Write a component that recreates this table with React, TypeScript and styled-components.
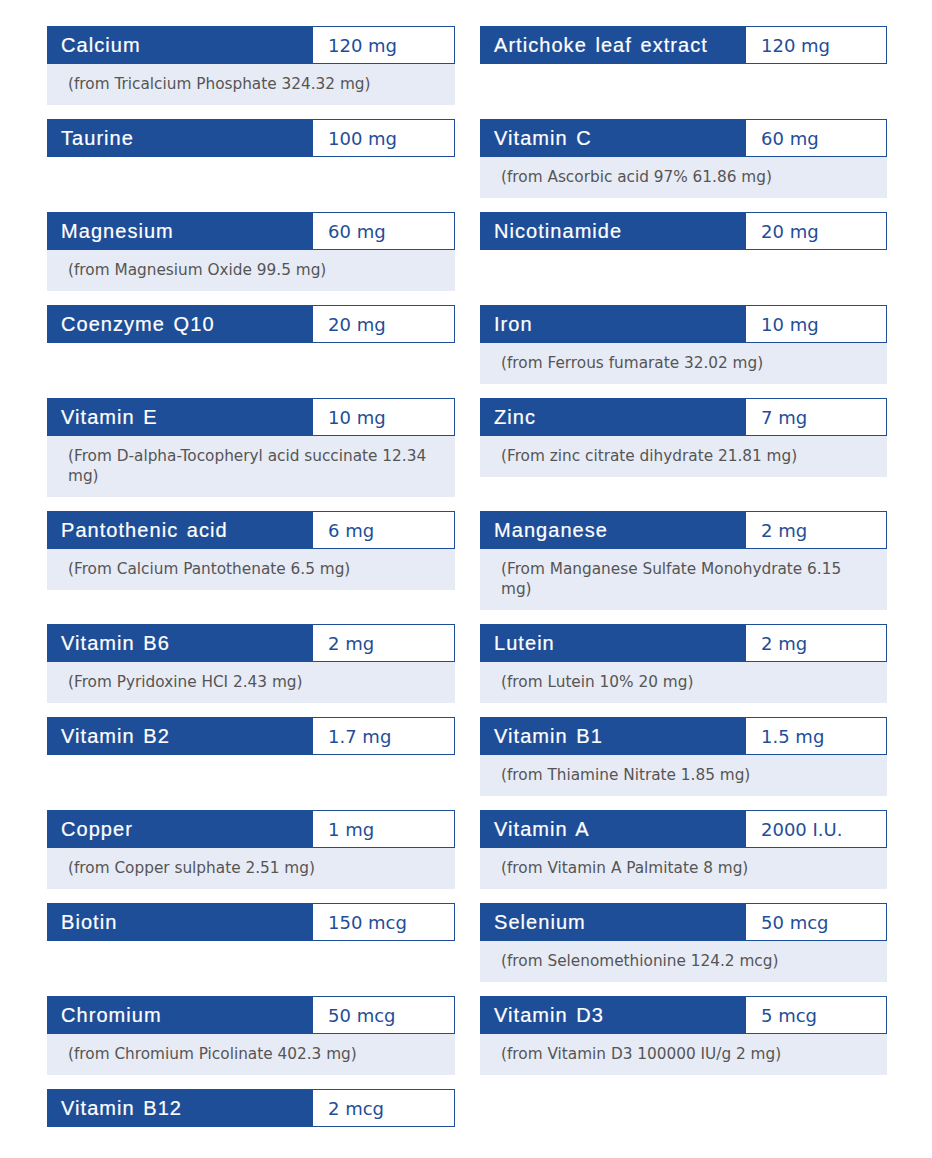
import React from "react";
import styled, { createGlobalStyle } from "styled-components";

const GlobalStyle = createGlobalStyle`
  html, body { margin: 0; padding: 0; background: #ffffff; }
  body { font-family: "DejaVu Sans", Verdana, sans-serif; }
`;

type Item = { name: string; amount: string; source?: string };

const items: (Item | null)[] = [
  { name: "Calcium", amount: "120 mg", source: "(from Tricalcium Phosphate 324.32 mg)" },
  { name: "Artichoke leaf extract", amount: "120 mg" },
  { name: "Taurine", amount: "100 mg" },
  { name: "Vitamin C", amount: "60 mg", source: "(from Ascorbic acid 97% 61.86 mg)" },
  { name: "Magnesium", amount: "60 mg", source: "(from Magnesium Oxide 99.5 mg)" },
  { name: "Nicotinamide", amount: "20 mg" },
  { name: "Coenzyme Q10", amount: "20 mg" },
  { name: "Iron", amount: "10 mg", source: "(from Ferrous fumarate 32.02 mg)" },
  { name: "Vitamin E", amount: "10 mg", source: "(From D-alpha-Tocopheryl acid succinate 12.34 mg)" },
  { name: "Zinc", amount: "7 mg", source: "(From zinc citrate dihydrate 21.81 mg)" },
  { name: "Pantothenic acid", amount: "6 mg", source: "(From Calcium Pantothenate 6.5 mg)" },
  { name: "Manganese", amount: "2 mg", source: "(From Manganese Sulfate Monohydrate 6.15 mg)" },
  { name: "Vitamin B6", amount: "2 mg", source: "(From Pyridoxine HCI 2.43 mg)" },
  { name: "Lutein", amount: "2 mg", source: "(from Lutein 10% 20 mg)" },
  { name: "Vitamin B2", amount: "1.7 mg" },
  { name: "Vitamin B1", amount: "1.5 mg", source: "(from Thiamine Nitrate 1.85 mg)" },
  { name: "Copper", amount: "1 mg", source: "(from Copper sulphate 2.51 mg)" },
  { name: "Vitamin A", amount: "2000 I.U.", source: "(from Vitamin A Palmitate 8 mg)" },
  { name: "Biotin", amount: "150 mcg" },
  { name: "Selenium", amount: "50 mcg", source: "(from Selenomethionine 124.2 mcg)" },
  { name: "Chromium", amount: "50 mcg", source: "(from Chromium Picolinate 402.3 mg)" },
  { name: "Vitamin D3", amount: "5 mcg", source: "(from Vitamin D3 100000 IU/g 2 mg)" },
  { name: "Vitamin B12", amount: "2 mcg" },
  null,
];

const Page = styled.div`
  padding: 26px 45px 30px 47px;
`;

const Grid = styled.div`
  display: grid;
  grid-template-columns: 408px 407px;
  column-gap: 25px;
  row-gap: 14px;
  align-items: start;
`;

const Card = styled.div`
  display: flex;
  flex-direction: column;
`;

const Header = styled.div`
  display: grid;
  grid-template-columns: 265px 1fr;
  height: 38px;
`;

const Name = styled.div`
  background: #1f4e98;
  color: #ffffff;
  font-family: "Liberation Sans", Arial, sans-serif;
  font-size: 20px;
  letter-spacing: 1.05px;
  word-spacing: 2px;
  -webkit-text-stroke: 0.2px #ffffff;
  display: flex;
  align-items: center;
  padding-left: 14px;
  white-space: nowrap;
`;

const Amount = styled.div`
  background: #ffffff;
  border: 1px solid #1f4e98;
  color: #1f4e98;
  font-family: "DejaVu Sans", Verdana, sans-serif;
  font-size: 18px;
  display: flex;
  align-items: center;
  padding-left: 15px;
  white-space: nowrap;
`;

const Source = styled.div`
  background: #e7ebf5;
  color: #555555;
  font-family: "DejaVu Sans", Verdana, sans-serif;
  font-size: 15.3px;
  line-height: 20px;
  padding: 10px 20px 11px 21px;
`;

export default function App() {
  return (
    <>
      <GlobalStyle />
      <Page>
        <Grid>
          {items.map((it, i) =>
            it ? (
              <Card key={i}>
                <Header>
                  <Name>{it.name}</Name>
                  <Amount>{it.amount}</Amount>
                </Header>
                {it.source && <Source>{it.source}</Source>}
              </Card>
            ) : (
              <div key={i} />
            )
          )}
        </Grid>
      </Page>
    </>
  );
}
